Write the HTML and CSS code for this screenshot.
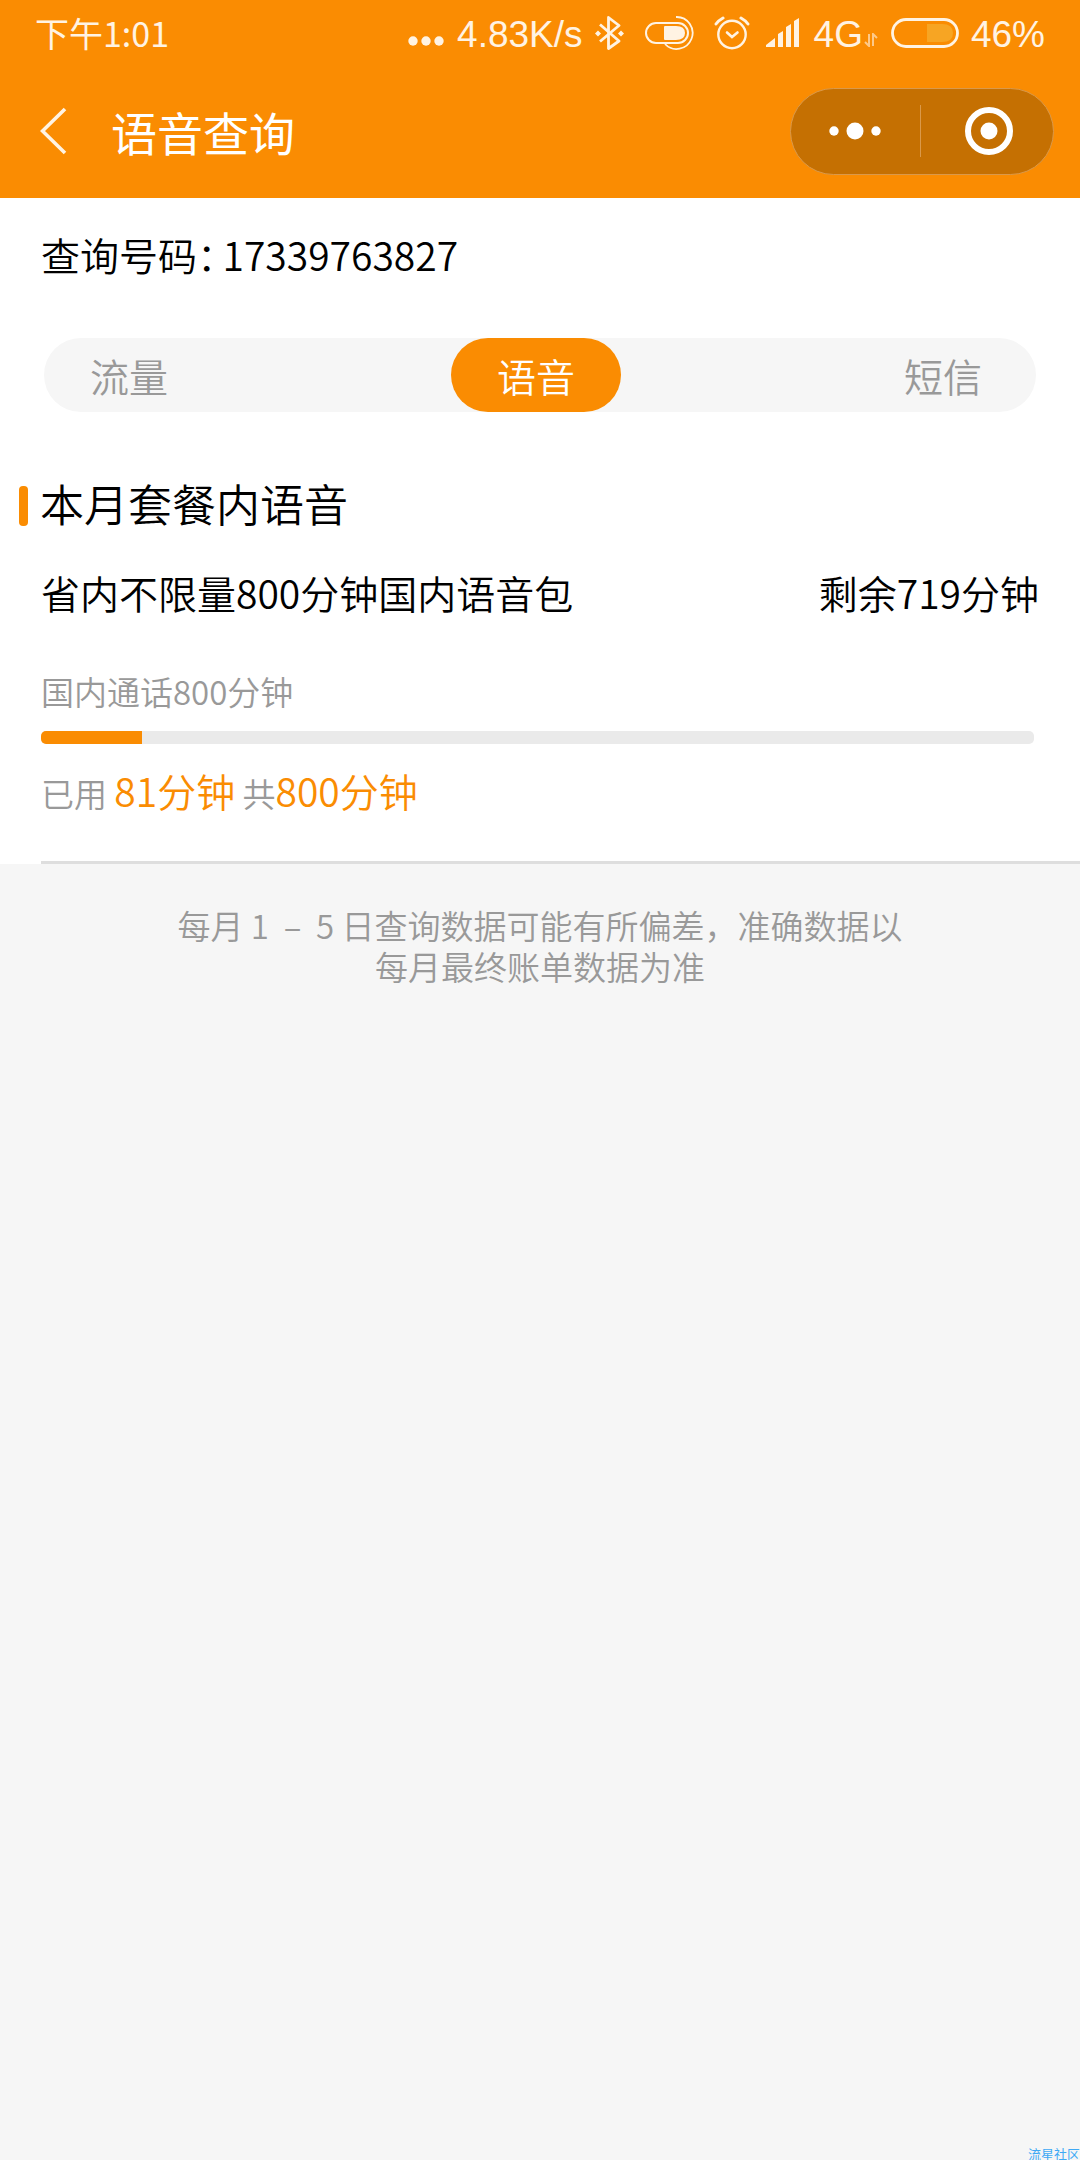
FILE: index.html
```html
<!DOCTYPE html>
<html lang="zh-CN">
<head>
<meta charset="utf-8">
<meta name="viewport" content="width=device-width">
<title>语音查询</title>
<link rel="stylesheet" href="styles.css">
</head>
<body>
<header class="top">
  <div class="status">
    <span class="status-time">下午1:01</span>
    <div class="status-icons">
      <svg width="38" height="34" viewBox="0 0 38 34" fill="currentColor" aria-hidden="true">
        <circle cx="6" cy="25" r="4.7"/><circle cx="19" cy="25" r="4.7"/><circle cx="32" cy="25" r="4.7"/>
      </svg>
      <span class="status-text">4.83K/s</span>
      <svg width="38" height="34" viewBox="0 0 38 34" fill="none" stroke="currentColor" stroke-width="2.8" aria-hidden="true">
        <path d="M5 8.5 24 25 13.500 32.500V1.500L24 9.500 5 25.500" stroke-linejoin="round"/>
        <path d="M0 17.500 3 14.500 6 17.500 3 20.500ZM23 17.500 26 14.500 29 17.500 26 20.500Z" fill="currentColor" stroke="none"/>
      </svg>
      <svg width="57" height="34" viewBox="0 0 57 34" fill="none" stroke="currentColor" stroke-width="2" aria-hidden="true">
        <rect x="1" y="7" width="42" height="20" rx="10"/>
        <path d="M20 10H31Q40 10 40 17T31 24H20Q19 24 19 23V11Q19 10 20 10Z" fill="currentColor" stroke="none"/>
        <path d="M31 1A16 16 0 1 1 20 28" stroke-width="1.800"/>
      </svg>
      <svg width="40" height="34" viewBox="0 0 40 34" fill="none" stroke="currentColor" stroke-width="2.400" stroke-linecap="round" aria-hidden="true">
        <circle cx="18" cy="18.500" r="13.700"/>
        <path d="M13 16.500 18 21 23.500 16.500" stroke-width="2.600"/>
        <path d="M2 8Q4.500 4.500 9 2M34 8Q31.500 4.500 27 2" stroke-width="3"/>
      </svg>
      <svg width="36" height="34" viewBox="0 0 36 34" fill="currentColor" aria-hidden="true">
        <path d="M0 31V29L9 22V31ZM12 31V18L17 15V31ZM20 31V11L25 8V31ZM28 31V5L33 2V31Z"/>
      </svg>
      <span class="network"><span class="status-text">4G</span>
        <svg width="14" height="14" viewBox="0 0 14 14" fill="none" stroke="currentColor" stroke-width="2" opacity=".6" aria-hidden="true">
          <path d="M5 1V13L1 9M9 13V1L13 5"/>
        </svg>
      </span>
      <svg width="69" height="34" viewBox="0 0 69 34" aria-hidden="true">
        <rect x="2.500" y="3.500" width="65" height="27" rx="13.500" fill="none" stroke="currentColor" stroke-width="2.800"/>
        <path d="M37 8H52Q63 8 63 17T52 26H37Z" fill="#f7a523"/>
      </svg>
      <span class="status-text">46%</span>
    </div>
  </div>
  <nav class="titlebar">
    <button class="back" aria-label="返回">
      <svg width="28" height="48" viewBox="0 0 28 48" fill="none" stroke="#fff3e3" stroke-width="3.600"><path d="M25 2 2.500 24 25 46"/></svg>
    </button>
    <h1 class="title">语音查询</h1>
    <div class="capsule">
      <button class="capsule-button" aria-label="更多">
        <svg width="52" height="18" viewBox="0 0 52 18" fill="#fff"><circle cx="5" cy="9" r="4.700"/><circle cx="26" cy="9" r="8.500"/><circle cx="47" cy="9" r="4.700"/></svg>
      </button>
      <button class="capsule-button capsule-close" aria-label="关闭">
        <svg width="48" height="48" viewBox="0 0 48 48"><circle cx="24" cy="24" r="21" fill="none" stroke="#fff" stroke-width="6"/><circle cx="24" cy="24" r="8.500" fill="#fff"/></svg>
      </button>
    </div>
  </nav>
</header>
<main>
  <section class="panel">
    <p class="number"><span class="number-label">查询号码：</span><span>17339763827</span></p>
    <div class="tabs" role="tablist">
      <button class="tab" role="tab">流量</button>
      <button class="tab tab-active" role="tab" aria-selected="true">语音</button>
      <button class="tab" role="tab">短信</button>
    </div>
    <h2 class="heading">本月套餐内语音</h2>
    <div class="plan"><span>省内不限量800分钟国内语音包</span><span>剩余719分钟</span></div>
    <div class="usage">
      <p class="usage-name">国内通话800分钟</p>
      <div class="bar" role="progressbar" aria-label="国内通话" aria-valuemin="0" aria-valuemax="800" aria-valuenow="81"><div class="bar-fill" style="width:10.125%"></div></div>
      <p class="usage-total">已用 <strong>81分钟</strong> 共<strong>800分钟</strong></p>
    </div>
  </section>
  <p class="note">每月 1 &nbsp;–&nbsp; 5 日查询数据可能有所偏差，准确数据以每月最终账单数据为准</p>
</main>
<div class="watermark">流星社区</div>
</body>
</html>
```
FILE: styles.css
```css
* {
  box-sizing: border-box;
}

body {
  position: relative;
  min-height: 100vh;
  margin: 0;
  overflow-x: hidden;
  background: #f6f6f6;
  color: #000;
  font-family: "Noto Sans CJK SC", sans-serif;
  font-size: 39px;
  font-weight: 350;
  line-height: 56px;
}

h1, h2, p {
  margin: 0;
  font-weight: inherit;
}

button {
  padding: 0;
  border: 0;
  background: none;
  color: inherit;
  font: inherit;
}

svg {
  display: block;
  flex: none;
}

.top {
  background: #fa8c02;
  color: #fff;
}

.status {
  display: flex;
  align-items: center;
  justify-content: space-between;
  height: 66px;
  padding: 0 35px;
  color: #fff3e3;
}

.status-time {
  font-size: 34px;
  font-weight: 400;
}

.status-icons {
  display: flex;
  align-items: center;
  gap: 12px;
  font-family: "Liberation Sans", sans-serif;
  font-size: 37px;
  line-height: 60px;
}

.status-text {
  padding-top: 4px;
}

.network {
  display: flex;
  align-items: center;
  gap: 1px;
}

.network svg {
  margin-top: 14px;
}

.titlebar {
  display: flex;
  align-items: center;
  height: 132px;
  padding: 0 26px 2px 40px;
}

.back {
  margin-right: 43px;
}

.title {
  flex: 1;
  font-size: 46px;
  font-weight: 400;
}

.capsule {
  display: flex;
  align-items: center;
  width: 264px;
  height: 87px;
  border: 1px solid #da994a;
  border-radius: 44px;
  background: #c57002;
}

.capsule-button {
  display: flex;
  flex: 1;
  align-items: center;
  justify-content: center;
  height: 52px;
}

.capsule-close {
  padding-left: 4px;
  border-left: 1px solid #da994a;
}

.panel {
  padding-top: 28px;
  background: #fff;
}

.number {
  display: flex;
  gap: 6px;
  padding-left: 41px;
}

.number-label {
  font-feature-settings: "halt";
}

.tabs {
  display: flex;
  justify-content: space-between;
  margin: 56px 44px 0;
  padding-right: 8px;
  border-radius: 37px;
  background: #f6f6f6;
  color: #999;
}

.tab {
  width: 170px;
  height: 74px;
  border-radius: 37px;
}

.tab-active {
  background: #fa8c02;
  color: #fff;
}

.heading {
  display: flex;
  align-items: flex-start;
  gap: 12px;
  margin-top: 63px;
  padding-left: 19px;
  font-size: 44px;
}

.heading::before {
  content: "";
  width: 9px;
  height: 40px;
  margin-top: 11px;
  border-radius: 4px;
  background: #fa8c02;
}

.plan {
  display: flex;
  justify-content: space-between;
  margin-top: 33px;
  padding: 0 41px;
}

.usage {
  margin-left: 41px;
  padding-top: 43px;
  padding-bottom: 40px;
  border-bottom: 3px solid #dedede;
  color: #999;
  font-size: 33px;
}

.bar {
  height: 13px;
  margin: 12px 46px 18px 0;
  overflow: hidden;
  border-radius: 5px;
  background: #eaeaea;
}

.bar-fill {
  height: 100%;
  background: #fa8c02;
}

.usage strong {
  color: #fa8c02;
  font-size: 39px;
  font-weight: inherit;
}

.note {
  padding: 41px 170px;
  color: #999;
  font-size: 33px;
  line-height: 41px;
  text-align: center;
}

/* site mark pinned over the page's bottom corner */
.watermark {
  position: absolute;
  right: 0;
  bottom: 0;
  color: #3fa9f5;
  font-size: 13px;
  font-weight: 400;
  line-height: 12px;
}
```
